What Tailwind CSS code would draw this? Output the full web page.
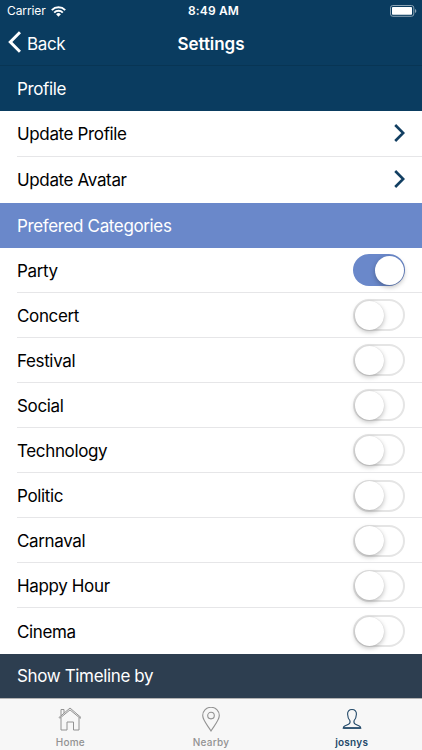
<!DOCTYPE html>
<html lang="en">
<head>
<meta charset="utf-8">
<title>Settings</title>
<script src="https://cdn.jsdelivr.net/npm/@tailwindcss/browser@4"></script>
</head>
<body class="w-[422px] h-[750px] overflow-hidden bg-white text-black flex flex-col font-['Inter','Liberation_Sans',sans-serif] text-[17px] leading-[24px] tracking-[-0.36px]">
  <header class="h-[66px] shrink-0 bg-[#0a3c60] border-b border-[#083554] text-white">
    <div class="h-[21px] grid grid-cols-3 items-center pl-[7px] pr-[5px] pt-[1px]">
      <div class="flex items-center gap-[6px] text-[12px] leading-none tracking-[-0.1px]">
        <span class="w-[38px] whitespace-nowrap">Carrier</span>
        <svg class="w-[15px] h-[11px]" viewBox="0 0 15 11" fill="none" stroke="white" stroke-width="2"><path d="M.8 4.1a9.5 9.5 0 0 1 13.4 0M3.2 6.6a6.1 6.1 0 0 1 8.6 0"/><path d="M7.5 10.7 5.1 8.3a3.4 3.4 0 0 1 4.8 0z" fill="white" stroke="none"/></svg>
      </div>
      <div class="text-center pl-[3px] text-[12px] leading-none font-semibold tracking-[0.15px] whitespace-nowrap">8:49 AM</div>
      <svg class="justify-self-end w-[27px] h-[12px]" viewBox="0 0 27 12"><rect x=".5" y=".5" width="23.3" height="10.8" rx="2.3" fill="none" stroke="#8ba3b4"/><rect x="2" y="2" width="20" height="7.8" rx=".8" fill="white"/><path d="M25 4c1.8.5 1.8 3.4 0 4z" fill="#8ba3b4"/></svg>
    </div>
    <div class="h-[44px] grid grid-cols-3 items-center pl-[8px] pr-[8px]">
      <div class="flex items-center gap-[6px]">
        <svg class="w-[13px] h-[22px] -mt-[2px]" viewBox="0 0 13 22" fill="none" stroke="white" stroke-width="3"><path d="M12 1.2 2.3 11 12 20.8"/></svg>
        <span class="pt-[1px]">Back</span>
      </div>
      <h1 class="pt-[1px] text-center font-semibold tracking-[-0.05px]">Settings</h1>
    </div>
  </header>

  <main class="flex-1 min-h-0 flex flex-col">
    <h2 class="h-[44.5px] shrink-0 pl-[17px] pt-[1px] flex items-center bg-[#0a3c60] text-white">Profile</h2>
    <div class="h-[46px] shrink-0 ml-[17px] pr-[17px] flex items-center justify-between border-b border-[#e6e6e8]"><span class="pt-[1px]">Update Profile</span>
      <svg class="w-[11px] h-[18px]" viewBox="0 0 11 18" fill="none" stroke="#123f62" stroke-width="2.6"><path d="m1.2 1 8 8-8 8"/></svg>
    </div>
    <div class="h-[46px] shrink-0 ml-[17px] pr-[17px] flex items-center justify-between"><span>Update Avatar</span>
      <svg class="w-[11px] h-[18px] -mt-[1px]" viewBox="0 0 11 18" fill="none" stroke="#123f62" stroke-width="2.6"><path d="m1.2 1 8 8-8 8"/></svg>
    </div>
    <h2 class="h-[45px] shrink-0 pl-[17px] pt-[1px] flex items-center bg-[#6a88ca] text-white">Prefered Categories</h2>
    <ul id="categories" class="h-[406px] shrink-0 ml-[17px] grid grid-rows-9"></ul>
    <h2 class="h-[44.5px] shrink-0 pl-[17px] pt-[1px] flex items-center bg-[#2d3e50] text-white">Show Timeline by</h2>
  </main>

  <nav class="h-[52px] shrink-0 grid grid-cols-3 bg-[#f7f7f7] border-t border-[#b2b2b2] text-[10px] leading-none font-medium tracking-[0.25px] text-[#929292]">
    <a class="flex flex-col items-center pt-[8px] gap-[5px]">
      <svg class="w-[24px] h-[25px]" viewBox="0 0 24 25" fill="none" stroke="#929292" stroke-width="1"><path d="M1 10.5 12 1l11 9.5-.8.8L12 2.9 1.8 11.3zM3 8.8V2.5h3v3.700M3 10.5v12.5h6v-8h6.500v8H21v-12.500"/></svg>Home
    </a>
    <a class="flex flex-col items-center pt-[8px] gap-[5px]">
      <svg class="w-[24px] h-[25px]" viewBox="0 0 24 25" fill="none" stroke="#929292" stroke-width="1.1"><path d="M12 24C9 19 3.7 13.3 3.7 8.6a8.300 8.300 0 0 1 16.600 0C20.300 13.300 15 19 12 24z"/><circle cx="12" cy="8.6" r="3.3"/></svg>Nearby
    </a>
    <a class="flex flex-col items-center pt-[8px] gap-[5px] font-semibold text-[#234969]">
      <svg class="w-[24px] h-[25px]" viewBox="0 0 24 25" fill="none" stroke="#234969" stroke-width="1.1"><path d="M12 2.500c-3 0-4.600 1.800-4.400 4.800.1 3.200 1 5 2.300 6.400.5 1.600.2 2.800-1.400 3.600l-3.800 1.600c-1 .5-1.400 1.300-1.500 2.300h17.600c-.1-1-.5-1.800-1.500-2.300l-3.800-1.600c-1.600-.8-1.900-2-1.400-3.600 1.300-1.400 2.200-3.200 2.300-6.400C16.600 4.300 15 2.500 12 2.500z"/><path d="M3.500 20.900h17" stroke-width="1.500"/></svg>josnys
    </a>
  </nav>

  <template id="row-off">
    <li class="pr-[17px] flex items-center justify-between border-b border-[#e6e6e8] last:border-b-0">
      <span class="pt-[2px]"></span>
      <div class="w-[52px] h-[32px] mt-[1px] rounded-full border-2 border-[#e5e5e5] flex items-center"><div class="size-[29px] shrink-0 rounded-full bg-white shadow-[0_2px_5px_rgba(0,0,0,0.25),0_0_1px_rgba(0,0,0,0.15)]"></div></div>
    </li>
  </template>
  <template id="row-on">
    <li class="pr-[17px] flex items-center justify-between border-b border-[#e6e6e8]">
      <span class="pt-[2px]"></span>
      <div class="w-[52px] h-[32px] mt-[1px] rounded-full bg-[#6a88ca] flex items-center justify-end pr-[1.5px]"><div class="size-[29px] rounded-full bg-white shadow-[0_2px_5px_rgba(0,0,0,0.28)]"></div></div>
    </li>
  </template>
  <script>
    const selected = 'Party';
    for (const name of ['Party', 'Concert', 'Festival', 'Social', 'Technology', 'Politic', 'Carnaval', 'Happy Hour', 'Cinema']) {
      const row = document.getElementById(name === selected ? 'row-on' : 'row-off').content.cloneNode(true);
      row.querySelector('span').textContent = name;
      document.getElementById('categories').append(row);
    }
  </script>
</body>
</html>
